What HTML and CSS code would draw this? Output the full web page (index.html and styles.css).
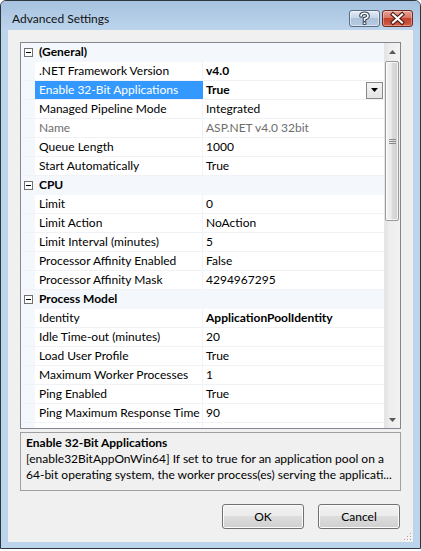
FILE: index.html
```html
<!DOCTYPE html>
<html>
<head>
<meta charset="utf-8">
<title>Advanced Settings</title>
<link rel="stylesheet" href="styles.css">
</head>
<body>
<div class="window">
  <div class="titlebar">
    <span class="title">Advanced Settings</span>
    <div class="caption-buttons">
      <div class="cbtn help">
        <svg width="31" height="17" viewBox="0 0 31 17">
          <path d="M12 6 Q12 3.3 15.5 3.3 Q19 3.3 19 6 Q19 8 15.5 8.8 L15.5 10.3" fill="none" stroke="#2d3e52" stroke-width="3.6" stroke-linecap="round"/>
          <rect x="13.7" y="11.6" width="3.6" height="3.2" fill="#2d3e52"/>
          <path d="M12 6 Q12 3.3 15.5 3.3 Q19 3.3 19 6 Q19 8 15.5 8.8 L15.5 10.3" fill="none" stroke="#fff" stroke-width="1.6" stroke-linecap="round"/>
          <rect x="14.6" y="12.4" width="1.8" height="1.6" fill="#fff"/>
        </svg>
      </div>
      <div class="cbtn close">
        <svg width="31" height="17" viewBox="0 0 31 17">
          <path d="M11 4.5 L20 12.5 M20 4.5 L11 12.5" stroke="#471510" stroke-width="4.2" stroke-linecap="square"/>
          <path d="M11 4.5 L20 12.5 M20 4.5 L11 12.5" stroke="#fff" stroke-width="2.2" stroke-linecap="square"/>
        </svg>
      </div>
    </div>
  </div>
  <div class="frame">
    <div class="client">
      <div class="grid">
        <div class="rows">
          <div class="cat"><span class="toggle"></span><span class="cat-name">(General)</span></div>
          <div class="row"><div class="gut"></div><div class="name">.NET Framework Version</div><div class="val bold">v4.0</div></div>
          <div class="row"><div class="gut"></div><div class="name selected">Enable 32-Bit Applications</div><div class="val bold"><span class="vtext">True</span><span class="dd"><svg width="7" height="4" viewBox="0 0 7 4"><path d="M0 0 H7 L3.5 4 Z" fill="#000"/></svg></span></div></div>
          <div class="row"><div class="gut"></div><div class="name">Managed Pipeline Mode</div><div class="val">Integrated</div></div>
          <div class="row"><div class="gut"></div><div class="name gray">Name</div><div class="val gray">ASP.NET v4.0 32bit</div></div>
          <div class="row"><div class="gut"></div><div class="name">Queue Length</div><div class="val">1000</div></div>
          <div class="row"><div class="gut"></div><div class="name">Start Automatically</div><div class="val">True</div></div>
          <div class="cat"><span class="toggle"></span><span class="cat-name">CPU</span></div>
          <div class="row"><div class="gut"></div><div class="name">Limit</div><div class="val">0</div></div>
          <div class="row"><div class="gut"></div><div class="name">Limit Action</div><div class="val">NoAction</div></div>
          <div class="row"><div class="gut"></div><div class="name">Limit Interval (minutes)</div><div class="val">5</div></div>
          <div class="row"><div class="gut"></div><div class="name">Processor Affinity Enabled</div><div class="val">False</div></div>
          <div class="row"><div class="gut"></div><div class="name">Processor Affinity Mask</div><div class="val">4294967295</div></div>
          <div class="cat"><span class="toggle"></span><span class="cat-name">Process Model</span></div>
          <div class="row"><div class="gut"></div><div class="name">Identity</div><div class="val bold">ApplicationPoolIdentity</div></div>
          <div class="row"><div class="gut"></div><div class="name">Idle Time-out (minutes)</div><div class="val">20</div></div>
          <div class="row"><div class="gut"></div><div class="name">Load User Profile</div><div class="val">True</div></div>
          <div class="row"><div class="gut"></div><div class="name">Maximum Worker Processes</div><div class="val">1</div></div>
          <div class="row"><div class="gut"></div><div class="name">Ping Enabled</div><div class="val">True</div></div>
          <div class="row"><div class="gut"></div><div class="name">Ping Maximum Response Time</div><div class="val">90</div></div>
          <div class="row"><div class="gut"></div><div class="name"></div><div class="val"></div></div>
        </div>
        <div class="vscroll">
          <div class="sb-btn"><svg width="7" height="4" viewBox="0 0 7 4"><path d="M3.5 0 L7 4 H0 Z" fill="#5a5a5a"/></svg></div>
          <div class="sb-track">
            <div class="thumb">
              <svg width="7" height="5" viewBox="0 0 7 5"><path d="M0 0.5 H7 M0 2.5 H7 M0 4.5 H7" stroke="#8a8a8a" stroke-width="1"/></svg>
            </div>
          </div>
          <div class="sb-btn"><svg width="7" height="4" viewBox="0 0 7 4"><path d="M0 0 H7 L3.5 4 Z" fill="#5a5a5a"/></svg></div>
        </div>
      </div>
      <div class="desc">
        <div class="desc-title">Enable 32-Bit Applications</div>
        <div class="desc-line">[enable32BitAppOnWin64] If set to true for an application pool on a</div>
        <div class="desc-line">64-bit operating system, the worker process(es) serving the applicati...</div>
      </div>
      <div class="buttons">
        <div class="btn">OK</div>
        <div class="btn">Cancel</div>
      </div>
      <svg class="grip" width="9" height="9" viewBox="0 0 9 9">
        <rect x="7" y="1" width="1" height="1" fill="#a8a8a8"/>
        <rect x="4" y="4" width="1" height="1" fill="#a8a8a8"/>
        <rect x="7" y="4" width="1" height="1" fill="#a8a8a8"/>
        <rect x="1" y="7" width="1" height="1" fill="#a8a8a8"/>
        <rect x="4" y="7" width="1" height="1" fill="#a8a8a8"/>
        <rect x="7" y="7" width="1" height="1" fill="#a8a8a8"/>
        <rect x="8" y="2" width="1" height="1" fill="#fff"/>
        <rect x="5" y="5" width="1" height="1" fill="#fff"/>
        <rect x="8" y="5" width="1" height="1" fill="#fff"/>
        <rect x="2" y="8" width="1" height="1" fill="#fff"/>
        <rect x="5" y="8" width="1" height="1" fill="#fff"/>
        <rect x="8" y="8" width="1" height="1" fill="#fff"/>
      </svg>
    </div>
  </div>
</div>
</body>
</html>
```

FILE: styles.css
```css
* { box-sizing: border-box; }
html, body { margin: 0; padding: 0; }
body {
  width: 421px;
  height: 551px;
  overflow: hidden;
  background: #ffffff;
  font-family: Lato, "Noto Sans", sans-serif;
  font-size: 12px;
  color: #000;
}
.window {
  width: 421px;
  height: 549px;
  border: 1px solid #2e3640;
  border-radius: 6px 6px 0 0;
  background: #bcd4ec;
  display: flex;
  flex-direction: column;
}
.titlebar {
  height: 29px;
  flex: none;
  display: flex;
  align-items: flex-start;
  justify-content: space-between;
  padding: 0 7px 0 11px;
  border-radius: 5px 5px 0 0;
  background: linear-gradient(#a6c2df, #b6cfe9 70%, #bcd4ec);
}
.title {
  margin-top: 10px;
  line-height: 16px;
  color: #111;
}
.caption-buttons {
  margin-top: 9px;
  display: flex;
  gap: 2px;
}
.cbtn {
  width: 31px;
  height: 17px;
  border-radius: 3px;
  display: flex;
}
.help {
  border: 1px solid #5a6e84;
  background: linear-gradient(#e4ecf5, #c6d6e8 45%, #aec3da 50%, #b7cbe0);
  box-shadow: inset 0 0 0 1px rgba(255,255,255,0.5);
}
.close {
  border: 1px solid #6b2a22;
  background: linear-gradient(#e8a294, #d77766 45%, #c2412f 50%, #cf5d47);
  box-shadow: inset 0 0 0 1px rgba(255,255,255,0.35);
}
.cbtn svg { margin: -1px; }
.frame {
  flex: 1;
  padding: 0 7px 6px 7px;
}
.client {
  position: relative;
  height: 512px;
  background: #f0f0f0;
  padding: 12px 12px 13px 12px;
  display: flex;
  flex-direction: column;
}
.grid {
  height: 387px;
  flex: none;
  border: 1px solid #828790;
  background: #fff;
  display: flex;
}
.rows {
  flex: 1;
  overflow: hidden;
}
.row, .cat {
  height: 19px;
  display: flex;
  border-bottom: 1px solid #f0f2f6;
  line-height: 18px;
}
.cat {
  background: #f4f7fc;
  align-items: center;
  font-weight: bold;
  border-bottom-color: #f4f7fc;
}
.toggle {
  width: 9px;
  height: 9px;
  margin-left: 3px;
  margin-right: 6px;
  border: 1px solid #707070;
  background: #fff;
  position: relative;
  flex: none;
}
.toggle::after {
  content: "";
  position: absolute;
  left: 1px;
  top: 3px;
  width: 5px;
  height: 1px;
  background: #000;
}
.cat-name { line-height: 18px; }
.gut {
  width: 14px;
  flex: none;
  background: #f4f7fc;
}
.name {
  width: 168px;
  flex: none;
  padding-left: 4px;
  border-right: 1px solid #f0f2f6;
  white-space: nowrap;
  overflow: hidden;
}
.name.selected {
  background: #3399ff;
  color: #fff;
  border-right-color: #3399ff;
}
.val {
  flex: 1;
  padding-left: 3px;
  white-space: nowrap;
  overflow: hidden;
  display: flex;
  align-items: center;
}
.vtext { flex: 1; }
.bold { font-weight: bold; }
.gray { color: #6d6d6d; }
.dd {
  width: 17px;
  height: 17px;
  margin-right: 1px;
  border: 1px solid #888;
  background: linear-gradient(#f4f4f4, #e4e4e4);
  display: flex;
  align-items: center;
  justify-content: center;
  flex: none;
}
.vscroll {
  width: 16px;
  flex: none;
  display: flex;
  flex-direction: column;
  background: linear-gradient(90deg, #e3e3e3, #ededed 30%, #f2f2f2);
  border-left: 1px solid #e6e6e6;
}
.sb-btn {
  height: 17px;
  flex: none;
  display: flex;
  align-items: center;
  justify-content: center;
}
.sb-track {
  flex: 1;
  padding: 1px 0 0 0;
}
.thumb {
  height: 160px;
  margin: 0 1px 0 0;
  border: 1px solid #9a9a9a;
  border-radius: 2px;
  background: linear-gradient(90deg, #f4f4f4, #e9e9e9 45%, #d9d9d9 55%, #d2d2d2);
  box-shadow: inset 0 0 0 1px rgba(255,255,255,0.7);
  display: flex;
  align-items: center;
  justify-content: center;
}
.desc {
  flex: none;
  margin-top: 3px;
  height: 59px;
  border: 1px solid #a0a0a0;
  padding: 2px 5px 7px 5px;
  line-height: 16px;
  white-space: nowrap;
  overflow: hidden;
}
.desc-title { font-weight: bold; }
.buttons {
  flex: none;
  margin-top: 13px;
  display: flex;
  justify-content: flex-end;
  gap: 14px;
  padding-right: 1px;
}
.btn {
  width: 82px;
  height: 25px;
  border: 1px solid #707070;
  border-radius: 3px;
  background: linear-gradient(#f2f2f2, #ebebeb 50%, #dddddd 50%, #cfcfcf);
  box-shadow: inset 0 0 0 1px #fbfbfb;
  display: flex;
  align-items: center;
  justify-content: center;
}
.grip {
  position: absolute;
  right: 1px;
  bottom: 1px;
}
```
